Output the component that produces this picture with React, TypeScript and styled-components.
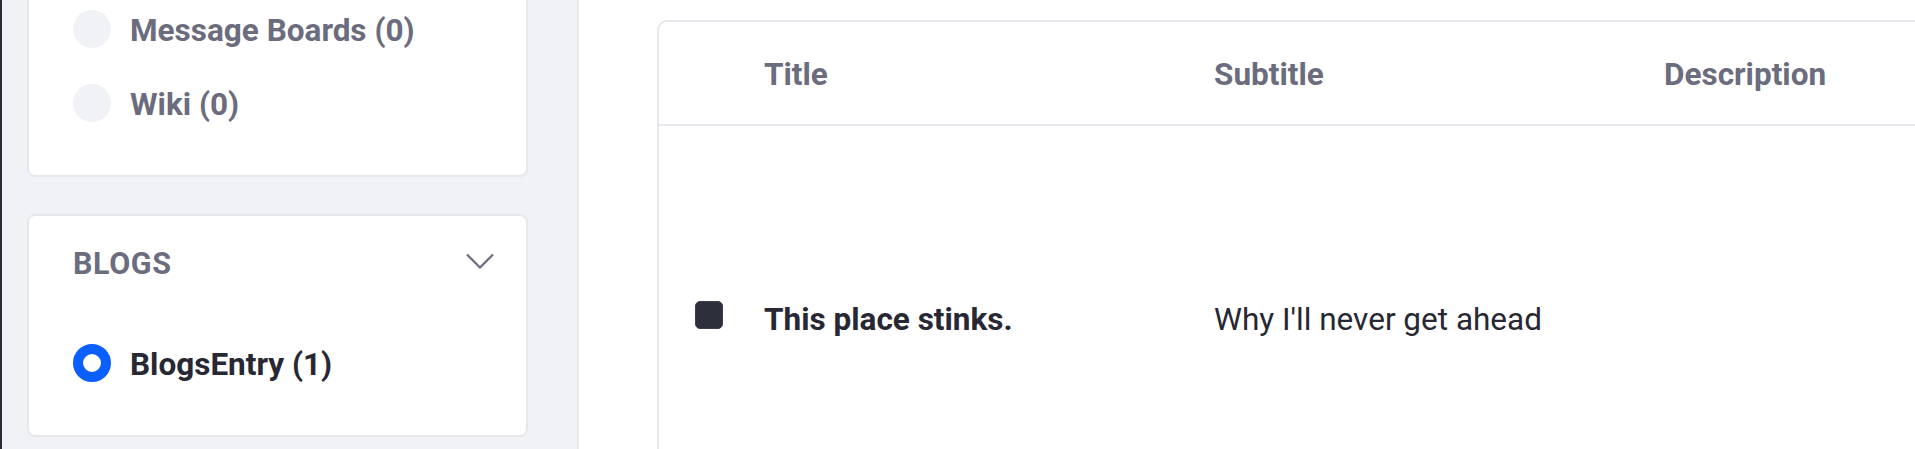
import React from "react";
import styled, { createGlobalStyle } from "styled-components";

const Color = {
  BG: "#f1f2f5",
  BORDER: "#e7e7ed",
  SECONDARY: "#6b6c7e",
  DARK: "#272833",
  PRIMARY: "#0b5fff",
};

const GlobalStyle = createGlobalStyle`
  html, body {
    margin: 0;
    padding: 0;
    overflow: hidden;
    background: #fff;
  }
  body {
    font-family: Roboto, "Liberation Sans", sans-serif;
    color: ${Color.DARK};
  }
`;

type Facet = { label: string; count: number; checked?: boolean };

const assetFacets: Facet[] = [
  { label: "Message Boards", count: 0 },
  { label: "Wiki", count: 0 },
];

const blogFacets: Facet[] = [{ label: "BlogsEntry", count: 1, checked: true }];

const columns = ["Title", "Subtitle", "Description"];

const rows = [{ title: "This place stinks.", subtitle: "Why I'll never get ahead", description: "" }];

export default function App() {
  return (
    <>
      <GlobalStyle />
      <Page>
        <Strip />
        <Sidebar>
          <FacetCard $scrolled>
            <FacetList>
              {assetFacets.map((f) => (
                <FacetRow key={f.label}>
                  <Radio $checked={f.checked} />
                  <FacetLabel $checked={f.checked}>
                    {f.label} ({f.count})
                  </FacetLabel>
                </FacetRow>
              ))}
            </FacetList>
          </FacetCard>

          <FacetCard>
            <CardHeader>
              <CardTitle>BLOGS</CardTitle>
              <Chevron width="28" height="16" viewBox="0 0 28 16">
                <polyline points="1,1.5 14,14.5 27,1.5" />
              </Chevron>
            </CardHeader>
            <FacetList $spaced>
              {blogFacets.map((f) => (
                <FacetRow key={f.label}>
                  <Radio $checked={f.checked} />
                  <FacetLabel $checked={f.checked}>
                    {f.label} ({f.count})
                  </FacetLabel>
                </FacetRow>
              ))}
            </FacetList>
          </FacetCard>
        </Sidebar>

        <Main>
          <TableCard>
            <HeadRow>
              <HeadCell />
              {columns.map((c) => (
                <HeadCell key={c}>{c}</HeadCell>
              ))}
            </HeadRow>
            {rows.map((r) => (
              <BodyRow key={r.title}>
                <CheckCell>
                  <Checkbox />
                </CheckCell>
                <BodyCell $strong>{r.title}</BodyCell>
                <BodyCell>{r.subtitle}</BodyCell>
                <BodyCell>{r.description}</BodyCell>
              </BodyRow>
            ))}
          </TableCard>
        </Main>
      </Page>
    </>
  );
}

const Page = styled.div`
  display: flex;
  height: 449px;
  overflow: hidden;
`;

const Strip = styled.div`
  width: 2px;
  flex-shrink: 0;
  background: #2b2c37;
`;

const Sidebar = styled.aside`
  width: 550px;
  flex-shrink: 0;
  box-sizing: content-box;
  padding: 0 0 0 25px;
  background: ${Color.BG};
  border-right: 2px solid ${Color.BORDER};
  display: flex;
  flex-direction: column;
  gap: 37px;
`;

const FacetCard = styled.section<{ $scrolled?: boolean }>`
  width: 501px;
  box-sizing: border-box;
  background: #fff;
  border: 2px solid ${Color.BORDER};
  border-radius: 8px;
  padding: 0 32px 48px 44px;
  margin-top: ${(p) => (p.$scrolled ? "-60px" : "0")};
  padding-top: ${(p) => (p.$scrolled ? "63px" : "0")};
`;

const CardHeader = styled.div`
  display: flex;
  align-items: center;
  justify-content: space-between;
  padding-top: 26px;
`;

const CardTitle = styled.h3`
  margin: 0;
  font-size: 30.5px;
  line-height: 44px;
  font-weight: 700;
  letter-spacing: 0.6px;
  color: ${Color.SECONDARY};
`;

const Chevron = styled.svg`
  margin-bottom: 6px;
  fill: none;
  stroke: ${Color.SECONDARY};
  stroke-width: 2.2;
`;

const FacetList = styled.ul<{ $spaced?: boolean }>`
  list-style: none;
  margin: ${(p) => (p.$spaced ? "53px" : "0")} 0 0;
  padding: 0;
  display: flex;
  flex-direction: column;
  gap: 26px;
`;

const FacetRow = styled.li`
  display: flex;
  align-items: center;
  gap: 19px;
  height: 48px;
`;

const Radio = styled.span<{ $checked?: boolean }>`
  width: 38px;
  height: 38px;
  border-radius: 50%;
  flex-shrink: 0;
  box-sizing: border-box;
  background: ${(p) => (p.$checked ? "#fff" : Color.BG)};
  border: ${(p) => (p.$checked ? `10px solid ${Color.PRIMARY}` : "none")};
`;

const FacetLabel = styled.span<{ $checked?: boolean }>`
  font-size: 31.5px;
  line-height: 48px;
  font-weight: 700;
  padding-top: 3px;
  color: ${(p) => (p.$checked ? Color.DARK : Color.SECONDARY)};
`;

const Main = styled.main`
  flex: 1;
  min-width: 0;
  padding: 20px 0 0 78px;
  overflow: hidden;
`;

const TableCard = styled.div`
  width: 1600px;
  box-sizing: border-box;
  border: 2px solid ${Color.BORDER};
  border-radius: 10px;
  background: #fff;
`;

const HeadRow = styled.div`
  display: grid;
  grid-template-columns: 105px 450px 450px 1fr;
  border-bottom: 2px solid ${Color.BORDER};
  padding: 29px 0 25px;
`;

const HeadCell = styled.div`
  font-size: 31.5px;
  line-height: 48px;
  font-weight: 700;
  color: ${Color.SECONDARY};
`;

const BodyRow = styled.div`
  display: grid;
  grid-template-columns: 105px 450px 450px 1fr;
  align-items: start;
  padding: 170px 0;
`;

const CheckCell = styled.div`
  padding: 5px 0 0 36px;
`;

const Checkbox = styled.span`
  display: block;
  width: 28px;
  height: 28px;
  box-sizing: border-box;
  border-radius: 5px;
  background: #2d2f3a;
  border: 1px solid #3c3e4a;
`;

const BodyCell = styled.div<{ $strong?: boolean }>`
  font-size: 31.5px;
  line-height: 48px;
  font-weight: ${(p) => (p.$strong ? 700 : 400)};
  color: ${Color.DARK};
`;
